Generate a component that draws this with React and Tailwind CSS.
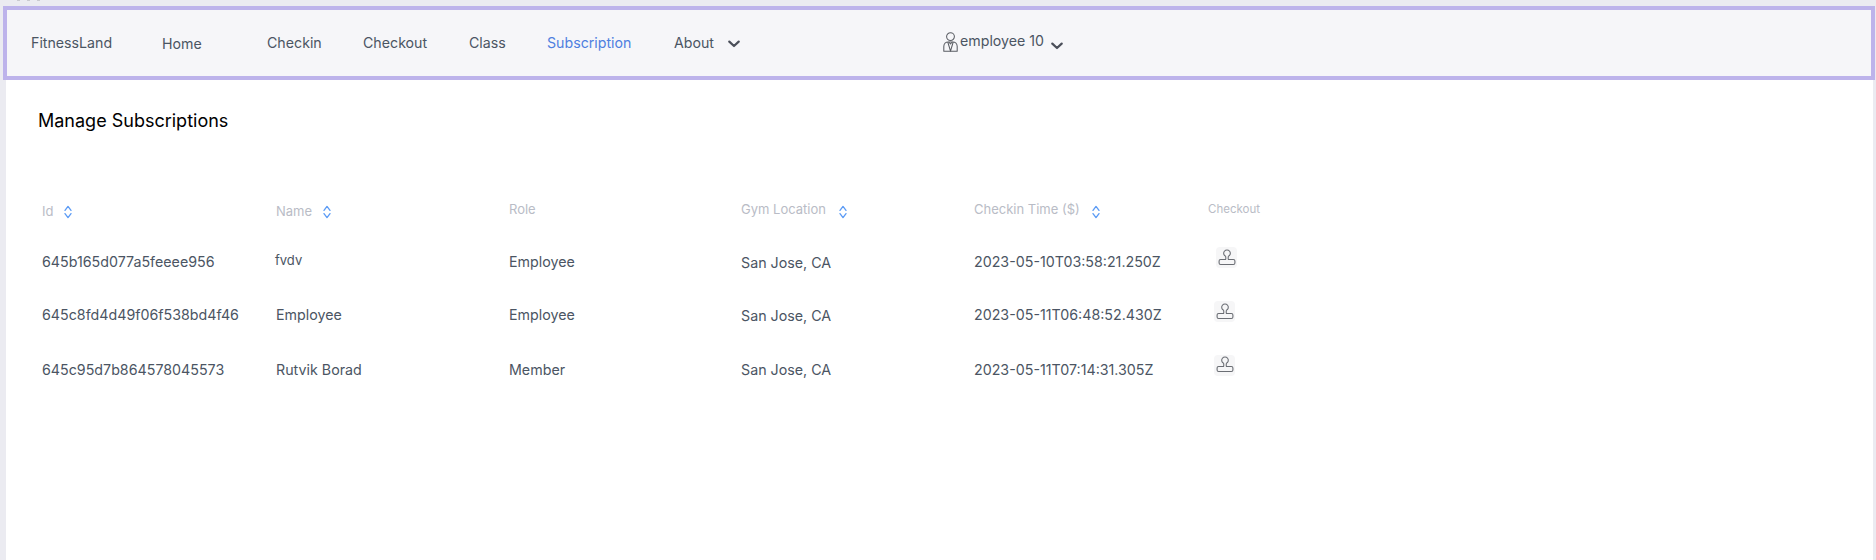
const font = { fontFamily: "Inter, sans-serif" };

function Chevron({ className }) {
  return (
    <svg viewBox="0 0 12 8" className={className} fill="none" stroke="#4b4f5a" strokeWidth="2.2" strokeLinecap="round" strokeLinejoin="round">
      <path d="M1.3 1.600L6 6l4.700-4.400" />
    </svg>
  );
}

function Sort({ className = "" }) {
  return (
    <svg viewBox="0 0 10 16" className={`w-[10px] h-[16px] ${className}`} fill="none" stroke="#5b9bf5" strokeWidth="1.3" strokeLinecap="round" strokeLinejoin="round">
      <path d="M2 6.400L5 2.400l3 4M2 9.600l3 4 3-4" />
    </svg>
  );
}

function Stamp() {
  return (
    <svg viewBox="0 0 20 20" className="w-[20px] h-[20px]" fill="none" stroke="#6b6e74" strokeWidth="1.100" strokeLinejoin="round">
      <path d="M8.600 8.300c.3 1 .3 2.200 0 3.200H3.600A1.500 1.500 0 0 0 2.100 13v2a1.500 1.500 0 0 0 1.500 1.500h12.800a1.500 1.500 0 0 0 1.500-1.500v-2a1.500 1.500 0 0 0-1.500-1.500h-5c-.3-1-.3-2.200 0-3.200a3.300 3.300 0 1 0-2.800 0z" />
    </svg>
  );
}

function UserIcon() {
  return (
    <svg viewBox="0 0 15 20" className="w-[15px] h-[20px]" fill="none" stroke="#5a5d64" strokeWidth="1.050" strokeLinejoin="round">
      <circle cx="7.500" cy="4.600" r="3.900" />
      <path d="M.8 19.200v-4.700c0-2.700 2-4.600 4.400-4.600h4.600c2.400 0 4.400 1.900 4.400 4.600v4.700z" />
      <path d="M4.800 10l2.700 9.200L10.200 10M6.100 10.200l1.400 1.800 1.400-1.800" />
    </svg>
  );
}

const links = [
  ["Home", "w-[105px] translate-y-[1px]", "text-[#4b5563]"],
  ["Checkin", "w-[96px]", "text-[#4b5563]"],
  ["Checkout", "w-[106px]", "text-[#4b5563]"],
  ["Class", "w-[78px]", "text-[#4b5563]"],
  ["Subscription", "w-[127px]", "text-[#4f7fe0]"],
];

const rows = [
  { id: "645b165d077a5feeee956", name: "fvdv", role: "Employee", gym: "San Jose, CA", time: "2023-05-10T03:58:21.250Z", h: "h-[53px]", gymClass: "translate-y-[1px]", stamp: "ml-[8px] -translate-y-[4px]" },
  { id: "645c8fd4d49f06f538bd4f46", name: "Employee", role: "Employee", gym: "San Jose, CA", time: "2023-05-11T06:48:52.430Z", h: "h-[53px]", gymClass: "translate-y-[1px]", stamp: "ml-[6px] -translate-y-[3px]" },
  { id: "645c95d7b864578045573", name: "Rutvik Borad", role: "Member", gym: "San Jose, CA", time: "2023-05-11T07:14:31.305Z", h: "h-[58px]", gymClass: "", stamp: "ml-[6px] -translate-y-[5px]" },
];

export default function App() {
  return (
    <div style={font} className="relative h-[560px] bg-[#ebebf1] pt-[6px] pl-[3px] pr-[1px] overflow-hidden">
      <span className="absolute top-0 left-[17px] w-[3px] h-[1px] bg-[#c9c9cf]" />
      <span className="absolute top-0 left-[27px] w-[3px] h-[1px] bg-[#c9c9cf]" />
      <span className="absolute top-0 left-[37px] w-[3px] h-[1px] bg-[#c9c9cf]" />
      <nav className="h-[74px] border-4 border-[#bdb3eb] bg-[#f6f6f9] flex items-center text-[14.2px] leading-[20px]">
        <span className="w-[155px] pl-[24px] text-[#4b5563] shrink-0">FitnessLand</span>
        {links.map(([t, w, c]) => (
          <span key={t} className={`${w} ${c} shrink-0`}>{t}</span>
        ))}
        <span className="text-[#4b5563] w-[42px] shrink-0">About</span>
        <Chevron className="w-[12px] h-[8px] ml-[12px] mt-[2px] shrink-0" />
        <div className="ml-[203px] flex items-center -translate-y-[1px]">
          <UserIcon />
          <span className="text-[#4b5563] ml-[2px] -translate-y-[1px]">employee 10</span>
          <Chevron className="w-[12px] h-[8px] ml-[7px] mt-[7px]" />
        </div>
      </nav>
      <main className="bg-white h-[480px] ml-[3px] mr-[2px] pt-[29px] pl-[32px]">
        <h1 className="text-[18px] leading-[24px] text-black">Manage Subscriptions</h1>
        <table className="table-fixed mt-[55px] w-[1310px] text-[14.25px] text-[#4b5563]">
          <thead>
            <tr className="h-[47px] text-[13px] text-[#b9bcc6] text-left">
              <th className="w-[238px] font-normal pl-[4px]">
                <span className="flex items-center gap-[10px]">Id <Sort /></span>
              </th>
              <th className="w-[233px] font-normal">
                <span className="flex items-center gap-[10px]">Name <Sort /></span>
              </th>
              <th className="w-[232px] font-normal">
                <span className="flex items-center -translate-y-[2px]">Role</span>
              </th>
              <th className="w-[233px] font-normal">
                <span className="flex items-center gap-[12px] -translate-y-[2px]">Gym Location <Sort className="translate-y-[2px]" /></span>
              </th>
              <th className="w-[234px] font-normal">
                <span className="flex items-center gap-[11px] -translate-y-[2px]">Checkin Time ($) <Sort className="translate-y-[2px]" /></span>
              </th>
              <th className="font-normal text-[11.5px]">
                <span className="flex items-center -translate-y-[2px]">Checkout</span>
              </th>
            </tr>
          </thead>
          <tbody>
            {rows.map((r) => (
              <tr key={r.id} className={r.h}>
                <td className="pl-[4px]">{r.id}</td>
                <td>
                  {r.name === "fvdv" ? (
                    <span className="block text-[13px] -translate-x-[1px] -translate-y-[1px]">{r.name}</span>
                  ) : r.name}
                </td>
                <td>{r.role}</td>
                <td><span className={`block ${r.gymClass}`}>{r.gym}</span></td>
                <td>{r.time}</td>
                <td>
                  <span className={`${r.stamp} flex items-center justify-center w-[21px] h-[21px] rounded-[4px] bg-[#f6f6f7]`}>
                    <Stamp />
                  </span>
                </td>
              </tr>
            ))}
          </tbody>
        </table>
      </main>
    </div>
  );
}
